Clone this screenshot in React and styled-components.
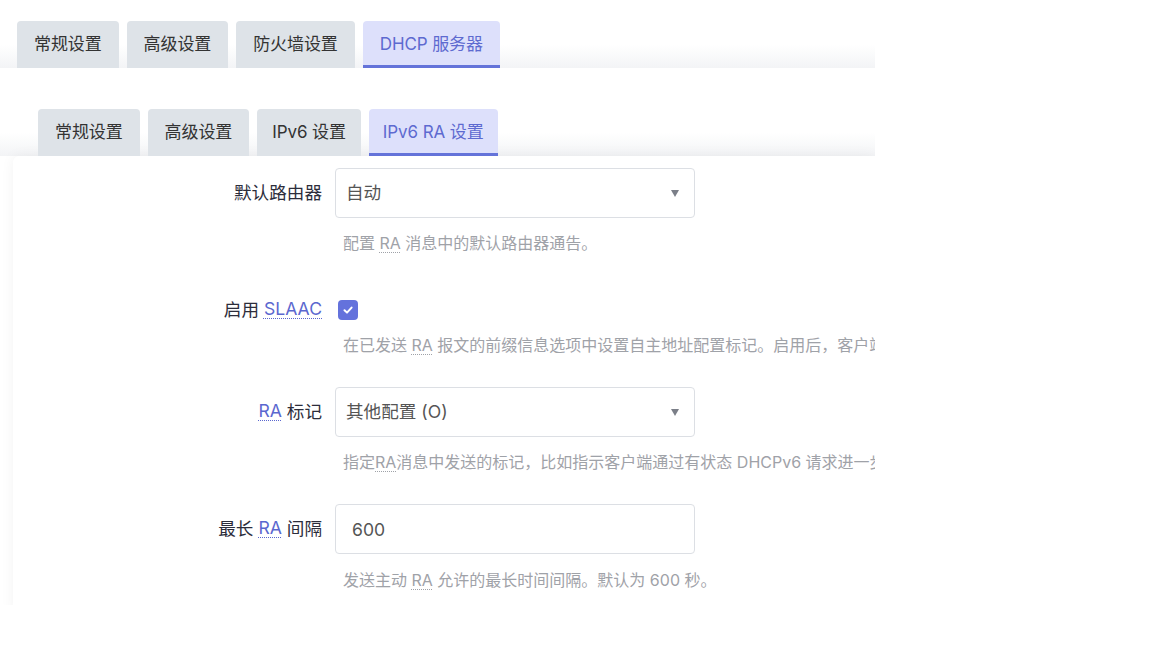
import React from "react";
import styled, { createGlobalStyle } from "styled-components";

const Global = createGlobalStyle`
  html, body { margin: 0; padding: 0; background: #fff; }
  body { font-family: Inter, "Noto Sans CJK SC", sans-serif; }
  * { box-sizing: border-box; }
`;

const Frame = styled.div`
  width: 875px;
  height: 605px;
  overflow: hidden;
  padding-top: 21px;
`;

const TabBar = styled.ul`
  list-style: none;
  margin: 0;
  display: flex;
  gap: 8px;
  height: 47px;
  padding: 0 0 0 ${(p) => p.$indent}px;
  background: linear-gradient(to bottom, rgba(255,255,255,0) 50%, #f3f4f6 100%);
`;

const Tab = styled.li`
  height: 47px;
  padding: 0 ${(p) => p.$pad || 17}px 4px;
  display: flex;
  align-items: center;
  font-size: 17px;
  letter-spacing: -0.1px;
  border-radius: 4px 4px 0 0;
  color: ${(p) => (p.$active ? "#5d6ad0" : "#333")};
  background: ${(p) => (p.$active ? "#dde0fb" : "#dee3e8")};
  box-shadow: ${(p) => (p.$active ? "inset 0 -3px 0 #6473d9" : "none")};
  white-space: nowrap;
`;

const Section = styled.div`
  padding-top: 41px;
`;

const Card = styled.div`
  margin-left: 13px;
  background: #fff;
  border-radius: 6px 0 0 0;
  box-shadow: 0 0 14px rgba(0, 0, 0, 0.05);
  height: 460px;
  padding-top: 12px;
`;

const Row = styled.div`
  display: grid;
  grid-template-columns: 309px 1fr;
  column-gap: 13px;
  padding-top: ${(p) => p.$top}px;
`;

const Label = styled.div`
  height: ${(p) => p.$h || 50}px;
  padding-bottom: 4px;
  display: flex;
  align-items: center;
  justify-content: flex-end;
  font-size: 17.6px;
  color: #2c2d3b;
  white-space: pre;
`;

const Abbr = styled.abbr`
  text-decoration: underline dotted;
  text-underline-offset: 3px;
  text-decoration-thickness: 1px;
  color: ${(p) => (p.$muted ? "inherit" : "#5b67cf")};
  cursor: help;
`;

const Control = styled.div`
  display: flex;
  flex-direction: column;
  min-width: 0;
`;

const Box = styled.div`
  width: 360px;
  height: 50px;
  border: 1px solid #dcdfe4;
  border-radius: 4px;
  display: flex;
  align-items: center;
  justify-content: space-between;
  padding: 0 ${(p) => (p.$input ? 16 : 10)}px ${(p) => (p.$input ? 0 : 3)}px;
  font-size: 17.6px;
  color: #555;
  background: #fff;
`;

const Caret = styled.span`
  width: 0;
  height: 0;
  border-left: 4px solid transparent;
  border-right: 4px solid transparent;
  border-top: 7px solid #7b7f88;
  margin: 3px 5px 0 0;
`;

const CheckWrap = styled.div`
  height: ${(p) => p.$h}px;
  display: flex;
  align-items: center;
  padding-left: 3px;
`;

const Check = styled.span`
  width: 20px;
  height: 20px;
  border-radius: 4px;
  background: #6472dc;
  display: flex;
  align-items: center;
  justify-content: center;
`;

const Help = styled.div`
  margin-top: ${(p) => p.$mt}px;
  padding-left: 8px;
  font-size: 16px;
  line-height: 22px;
  color: #9fa2a8;
  white-space: pre;
`;

export default function App() {
  return (
    <>
      <Global />
      <Frame>
        <TabBar $indent={17}>
          <Tab>常规设置</Tab>
          <Tab>高级设置</Tab>
          <Tab>防火墙设置</Tab>
          <Tab $active>DHCP 服务器</Tab>
        </TabBar>
        <Section>
          <TabBar $indent={38}>
            <Tab $pad={17}>常规设置</Tab>
            <Tab $pad={17}>高级设置</Tab>
            <Tab $pad={15}>IPv6 设置</Tab>
            <Tab $pad={14} $active>IPv6 RA 设置</Tab>
          </TabBar>
          <Card>
            <Row $top={0}>
              <Label>默认路由器</Label>
              <Control>
                <Box>
                  <span>自动</span>
                  <Caret />
                </Box>
                <Help $mt={14}>
                  配置 <Abbr $muted>RA</Abbr> 消息中的默认路由器通告。
                </Help>
              </Control>
            </Row>
            <Row $top={38}>
              <Label $h={36}>
                启用 <Abbr>SLAAC</Abbr>
              </Label>
              <Control>
                <CheckWrap $h={36}>
                  <Check>
                    <svg width="12" height="12" viewBox="0 0 12 12">
                      <path d="M2.5 6.2 L5 8.6 L9.6 3.6" fill="none" stroke="#fff" strokeWidth="2" strokeLinecap="round" strokeLinejoin="round" />
                    </svg>
                  </Check>
                </CheckWrap>
                <Help $mt={6}>
                  在已发送 <Abbr $muted>RA</Abbr> 报文的前缀信息选项中设置自主地址配置标记。启用后，客户端将执行无状态 IPv6 地址自动配置。
                </Help>
              </Control>
            </Row>
            <Row $top={31}>
              <Label>
                <Abbr>RA</Abbr> 标记
              </Label>
              <Control>
                <Box>
                  <span>其他配置 (O)</span>
                  <Caret />
                </Box>
                <Help $mt={14}>
                  指定<Abbr $muted>RA</Abbr>消息中发送的标记，比如指示客户端通过有状态 DHCPv6 请求进一步的信息。
                </Help>
              </Control>
            </Row>
            <Row $top={31}>
              <Label>
                最长 <Abbr>RA</Abbr> 间隔
              </Label>
              <Control>
                <Box $input>
                  <span>600</span>
                </Box>
                <Help $mt={15}>
                  发送主动 <Abbr $muted>RA</Abbr> 允许的最长时间间隔。默认为 600 秒。
                </Help>
              </Control>
            </Row>
          </Card>
        </Section>
      </Frame>
    </>
  );
}
